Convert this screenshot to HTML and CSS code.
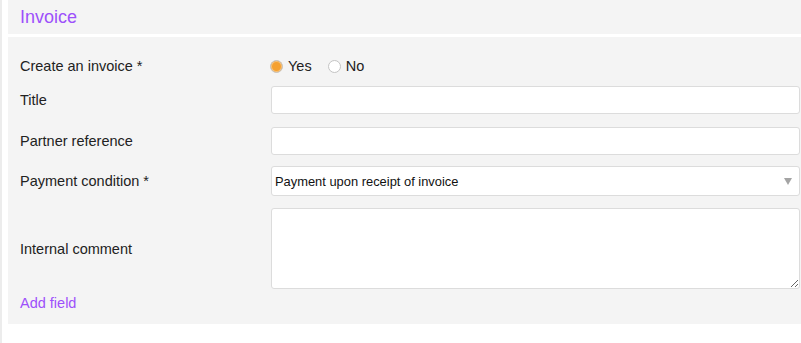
FILE: index.html
```html
<!DOCTYPE html>
<html lang="en">
<head>
    <meta charset="UTF-8">
    <meta name="viewport" content="width=device-width, initial-scale=1.0">
    <title>Invoice</title>
    <link rel="stylesheet" href="styles.css">
</head>
<body>
    <div class="page">
        <section class="panel">
            <header class="panel-head">
                <h2 class="panel-title">Invoice</h2>
            </header>
            <div class="panel-body">
                <div class="row row-radio">
                    <label class="row-label">Create an invoice *</label>
                    <div class="radio-group">
                        <label class="radio"><input type="radio" name="create" checked> Yes</label>
                        <label class="radio"><input type="radio" name="create"> No</label>
                    </div>
                </div>
                <div class="row row-text">
                    <label class="row-label">Title</label>
                    <input type="text" class="field">
                </div>
                <div class="row row-text row-partner">
                    <label class="row-label">Partner reference</label>
                    <input type="text" class="field">
                </div>
                <div class="row row-select">
                    <label class="row-label">Payment condition *</label>
                    <div class="select">
                        <span>Payment upon receipt of invoice</span>
                        <span class="arrow"></span>
                    </div>
                </div>
                <div class="row row-area">
                    <label class="row-label">Internal comment</label>
                    <textarea class="field area"></textarea>
                </div>
                <a href="#" class="add-field">Add field</a>
            </div>
        </section>
    </div>
</body>
</html>
```

FILE: styles.css
```css
* {
    margin: 0;
    padding: 0;
    box-sizing: border-box;
    font-family: 'Liberation Sans', Arial, sans-serif;
}

body {
    background: #fff;
    color: #222;
    font-size: 14.5px;
}

.page {
    border-left: 2px solid #ececec;
    padding-left: 6px;
    min-height: 343px;
}

.panel-head {
    background: #f4f4f4;
    height: 34px;
    padding-left: 12px;
    display: flex;
    align-items: center;
}

.panel-title {
    font-size: 18px;
    font-weight: normal;
    color: #9d50fb;
}

.panel-body {
    background: #f4f4f4;
    margin-top: 3px;
    padding: 19px 0 13px 12px;
}

.row {
    display: grid;
    grid-template-columns: 251px 1fr;
    align-items: center;
}

.row-label {
    font-size: 14.5px;
    color: #222;
}

.row-radio {
    height: 20px;
    margin-bottom: 10px;
}

.radio-group {
    display: flex;
    gap: 17px;
}

.radio {
    display: flex;
    align-items: center;
    gap: 5px;
    font-size: 14.5px;
}

.radio input {
    appearance: none;
    width: 13px;
    height: 13px;
    border-radius: 50%;
    border: 1px solid #c4c4c4;
    background: #fff;
    margin: 0 0 0 -1px;
}

.radio input:checked {
    background: #f5a131;
    box-shadow: inset 0 0 0 1px #f8c27a;
}

.field {
    height: 28px;
    width: 529px;
    border: 1px solid #dcdcdc;
    border-radius: 3px;
    background: #fff;
    outline: none;
    font-size: 13px;
    padding: 0 4px;
}

.row-text {
    margin-bottom: 13px;
}

.row-partner {
    margin-bottom: 11px;
}

.row-select {
    margin-bottom: 12px;
}

.select {
    height: 30px;
    width: 529px;
    border: 1px solid #dcdcdc;
    border-radius: 3px;
    background: #fff;
    display: flex;
    align-items: center;
    justify-content: space-between;
    padding: 0 7px 0 3px;
    font-size: 12.9px;
    color: #111;
}

.arrow {
    width: 0;
    height: 0;
    border-left: 4px solid transparent;
    border-right: 4px solid transparent;
    border-top: 7px solid #a4a4a4;
    margin-top: 1px;
}

.area {
    height: 81px;
    resize: vertical;
}

.add-field {
    display: block;
    margin-top: 6px;
    font-size: 14.5px;
    line-height: 16px;
    color: #9d50fb;
    text-decoration: none;
}
```
